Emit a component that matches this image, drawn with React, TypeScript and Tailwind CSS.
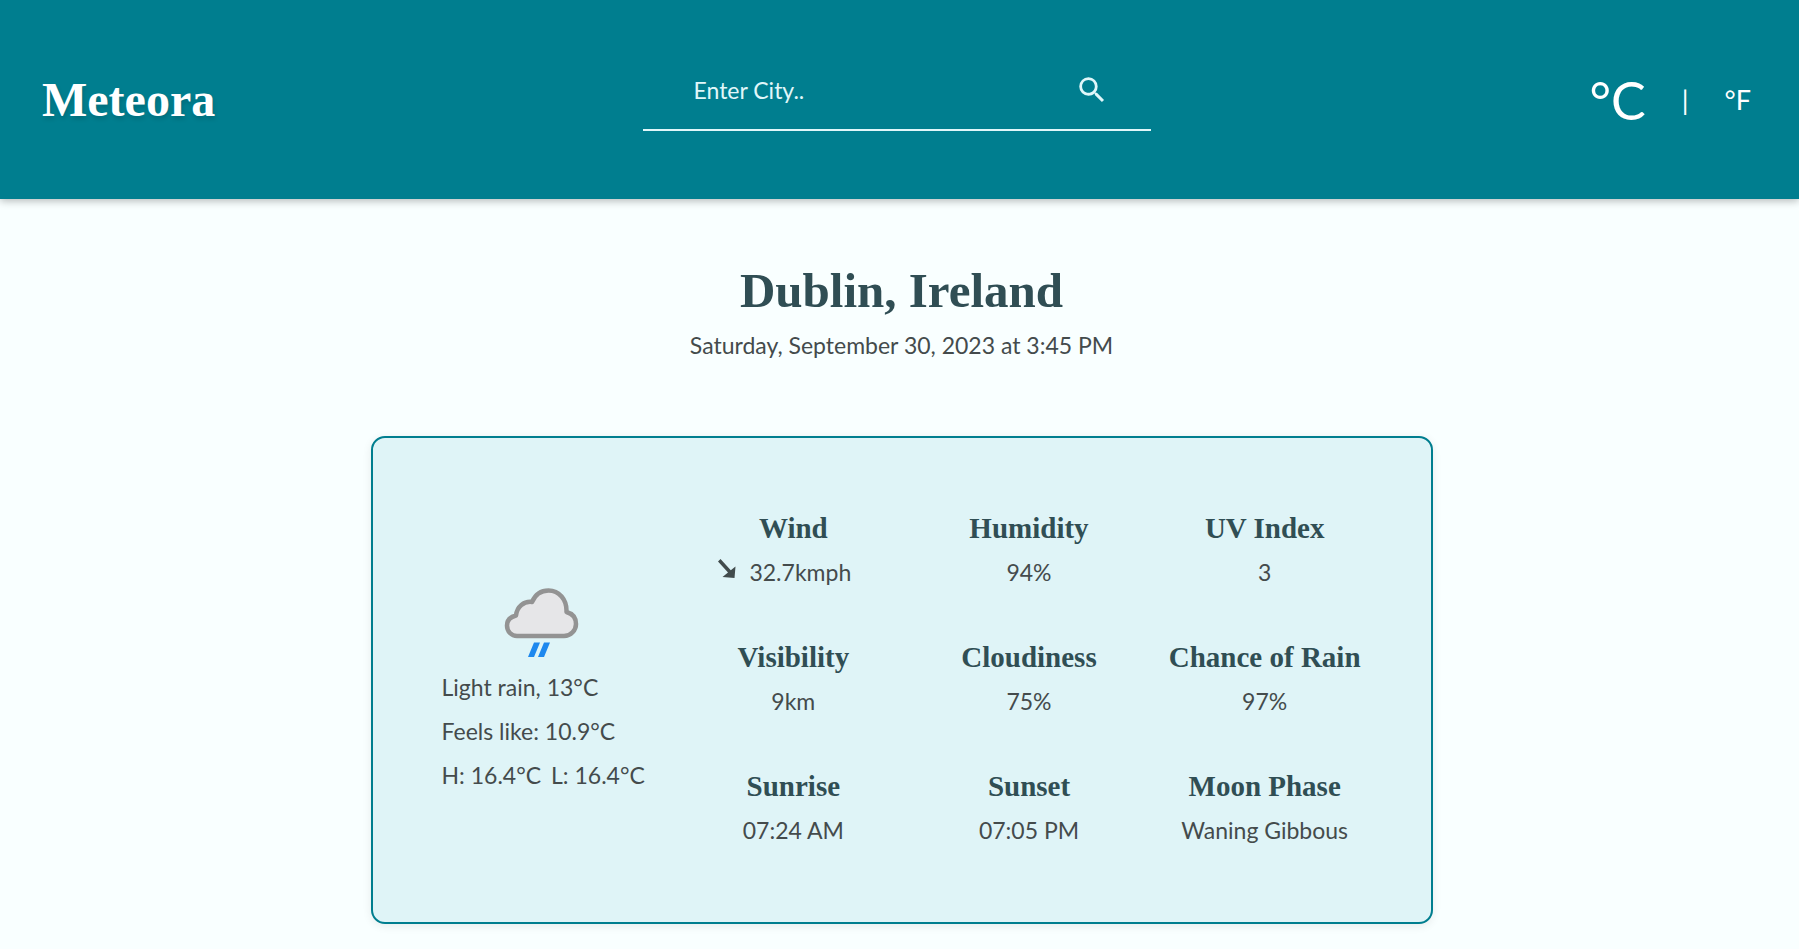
import { MdSearch } from "react-icons/md";

const details = [
  { label: "Wind", value: "32.7kmph", arrow: true },
  { label: "Humidity", value: "94%" },
  { label: "UV Index", value: "3" },
  { label: "Visibility", value: "9km" },
  { label: "Cloudiness", value: "75%" },
  { label: "Chance of Rain", value: "97%" },
  { label: "Sunrise", value: "07:24 AM" },
  { label: "Sunset", value: "07:05 PM" },
  { label: "Moon Phase", value: "Waning Gibbous" },
];

function RainCloud() {
  return (
    <svg viewBox="0 0 84 84" className="size-[84px]" role="img" aria-label="Light rain">
      <path
        d="M18 59H65C72 59 77 53 77 47C77 40.500 73 36.500 67.500 35C68 22.500 60 13.500 49.500 13.500C42 13.500 36 18 33 25C25 24 18 29.500 17 38.500C11 40 8 44 8 48.500C8 54.500 12.500 59 18 59Z"
        fill="#e6e6e8"
        stroke="#939393"
        strokeWidth="4.500"
        strokeLinejoin="round"
      />
      <path d="M35 65.500H41L35 80H29ZM45 65.500H51L45 80H39Z" fill="#1e88ee" />
    </svg>
  );
}

function WindArrow() {
  return (
    <svg viewBox="0 0 20 20" className="size-5" fill="#414b4c" aria-hidden="true">
      <path d="M3.500 1L13.800 12.300L18.500 8.500L17.500 20L5.500 19L11 14.500L1 3.500Z" />
    </svg>
  );
}

export default function App() {
  return (
    <div className="min-h-screen bg-[#f9ffff] font-['Lato',sans-serif] text-[23px] leading-[28px] text-[#444b4c]">
      <header className="grid min-h-[199px] grid-cols-[1fr_508px_1fr] items-center bg-[#007e8f] pr-12 pl-[42px] text-[#e0f7fa] shadow-[0_2px_8px_rgba(0,0,0,0.28)]">
        <h1 className="font-['Liberation_Serif',serif] text-[48px] leading-[60px] font-bold text-white [text-shadow:1px_3px_4px_rgba(0,0,0,0.15)]">
          Meteora
        </h1>
        <form
          className="-mt-5 flex h-[82px] items-center border-b-2 border-[#e0f7fa] pt-[2px] pr-[42px] pl-[51px]"
          onSubmit={(e) => e.preventDefault()}
        >
          <input
            type="text"
            aria-label="City"
            placeholder="Enter City.."
            className="min-w-0 flex-1 bg-transparent outline-none placeholder:text-[#e0f7fa]"
          />
          <button type="submit" aria-label="Search">
            <MdSearch className="size-[34px]" />
          </button>
        </form>
        <div className="flex items-center justify-end gap-9 text-[27px] leading-[60px] text-white">
          <button type="button" className="text-[52px]">
            °C
          </button>
          <span>|</span>
          <button type="button">°F</button>
        </div>
      </header>

      <main className="flex flex-col items-center pt-[62px] pb-6 pl-1">
        <h2 className="text-center font-['Liberation_Serif',serif] text-[49px] leading-[60px] font-bold text-[#304e54]">
          Dublin, Ireland
        </h2>
        <p className="mt-[10px] text-center">Saturday, September 30, 2023 at 3:45 PM</p>

        <section className="mt-[77px] flex min-h-[488px] w-full max-w-[1062px] items-center rounded-[14px] border-2 border-[#007e8f] bg-[#dff4f7] pr-12 pl-[69px] shadow-[0_2px_10px_rgba(0,0,0,0.08)]">
          <div className="flex w-[234px] shrink-0 flex-col pt-[6px]">
            <div className="flex w-[199px] justify-center">
              <RainCloud />
            </div>
            <div className="mt-3 flex flex-col gap-4">
              <p>Light rain, 13°C</p>
              <p>Feels like: 10.9°C</p>
              <p className="flex gap-[10px] whitespace-nowrap">
                <span>H: 16.4°C</span>
                <span>L: 16.4°C</span>
              </p>
            </div>
          </div>
          <dl className="grid flex-1 grid-cols-3 gap-y-[50px] pb-[10px]">
            {details.map((d) => (
              <div key={d.label} className="flex flex-col items-center gap-2">
                <dt className="font-['Liberation_Serif',serif] text-[29px] leading-[43px] font-bold whitespace-nowrap text-[#304e54]">
                  {d.label}
                </dt>
                {d.arrow ? (
                  <dd className="flex gap-3 pr-[18px] whitespace-nowrap">
                    <WindArrow />
                    {d.value}
                  </dd>
                ) : (
                  <dd className="whitespace-nowrap">{d.value}</dd>
                )}
              </div>
            ))}
          </dl>
        </section>
      </main>
    </div>
  );
}
